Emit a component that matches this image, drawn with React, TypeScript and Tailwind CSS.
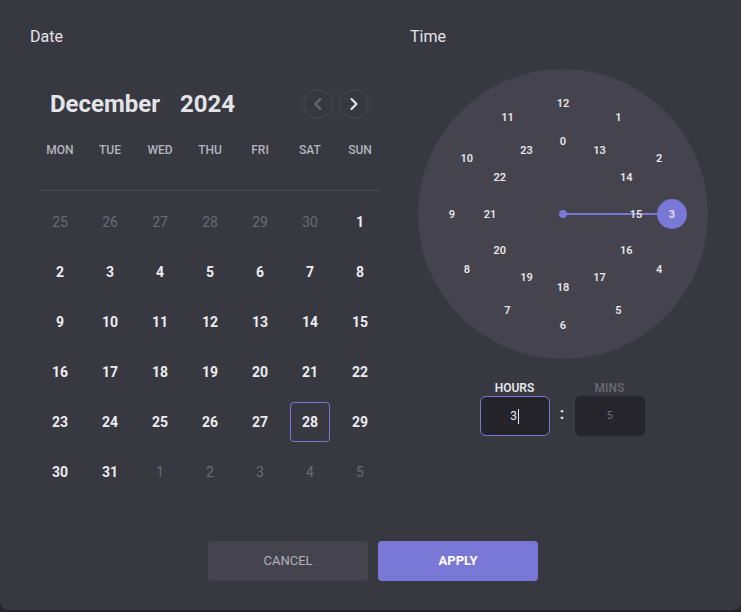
import { ChevronLeft, ChevronRight } from 'lucide-react';

const WEEKDAYS = ['MON', 'TUE', 'WED', 'THU', 'FRI', 'SAT', 'SUN'];

type Day = { n: number; muted?: boolean };

// December 2024, Monday-first, padded with days from Nov / Jan
const DAYS: Day[] = [
  ...[25, 26, 27, 28, 29, 30].map((n) => ({ n, muted: true })),
  ...Array.from({ length: 31 }, (_, i) => ({ n: i + 1 })),
  ...[1, 2, 3, 4, 5].map((n) => ({ n, muted: true })),
];

const SELECTED_DAY = 28;
const SELECTED_HOUR = 3;

function Calendar() {
  return (
    <div className="flex flex-col">
      <div className="mt-[41px] flex h-[32px] items-center pl-[50px] pr-[11px]">
        <span className="text-[24px] font-bold text-[#e4e4e8]">December</span>
        <span className="ml-[20px] text-[24px] font-bold text-[#e4e4e8]">2024</span>
        <div className="ml-auto flex gap-[6px]">
          <button className="flex h-[30px] w-[30px] items-center justify-center rounded-full border border-[#4a4a54] text-[#6c6c76]">
            <ChevronLeft size={20} strokeWidth={2.5} />
          </button>
          <button className="flex h-[30px] w-[30px] items-center justify-center rounded-full border border-[#4a4a54] text-[#ececf0]">
            <ChevronRight size={20} strokeWidth={2.5} />
          </button>
        </div>
      </div>

      <div className="ml-[35px] mt-[22px] grid w-[350px] grid-cols-7">
        {WEEKDAYS.map((d) => (
          <div key={d} className="h-[16px] text-center text-[12px] font-medium leading-[16px] text-[#b4b4bc]">
            {d}
          </div>
        ))}
      </div>

      <div className="ml-[40px] mt-[32px] h-px w-[340px] bg-[#4a4a54]" />

      <div className="ml-[35px] mt-[6px] grid w-[350px] grid-cols-7">
        {DAYS.map((d, i) => {
          const selected = !d.muted && d.n === SELECTED_DAY;
          return (
            <div key={i} className="flex h-[50px] items-center justify-center">
              <div
                className={
                  'flex h-[40px] w-[40px] items-center justify-center rounded-[4px] border text-[14px] ' +
                  (selected ? 'border-[#7a78d6] ' : 'border-transparent ') +
                  (d.muted ? 'font-normal text-[#6b6b74]' : 'font-bold text-[#ececf0]')
                }
              >
                {d.n}
              </div>
            </div>
          );
        })}
      </div>
    </div>
  );
}

function ClockFace() {
  const c = 145;
  const outer = 111;
  const inner = 73;
  const pos = (i: number, r: number) => {
    const a = (i / 12) * Math.PI * 2 - Math.PI / 2;
    return { x: c + Math.cos(a) * r, y: c + Math.sin(a) * r };
  };
  const sel = pos(SELECTED_HOUR, outer - 2);

  return (
    <svg width={290} height={290} viewBox="0 0 290 290" className="block">
      <circle cx={c} cy={c} r={145} fill="#45444e" />
      <line x1={c} y1={c} x2={sel.x} y2={sel.y} stroke="#7a78d6" strokeWidth={2} />
      <circle cx={c} cy={c} r={4} fill="#7a78d6" />
      <circle cx={sel.x} cy={sel.y} r={15} fill="#7a78d6" />
      {Array.from({ length: 12 }, (_, i) => {
        const p = pos(i, outer);
        const label = i === 0 ? 12 : i;
        return (
          <text
            key={'o' + i}
            x={i === SELECTED_HOUR ? sel.x : p.x}
            y={i === SELECTED_HOUR ? sel.y : p.y}
            textAnchor="middle"
            dominantBaseline="central"
            fontSize={11}
            fontWeight={600}
            fill="#e6e6ea"
          >
            {label}
          </text>
        );
      })}
      {Array.from({ length: 12 }, (_, i) => {
        const p = pos(i, inner);
        return (
          <text
            key={'i' + i}
            x={p.x}
            y={p.y}
            textAnchor="middle"
            dominantBaseline="central"
            fontSize={11}
            fontWeight={600}
            fill="#e6e6ea"
          >
            {i === 0 ? 0 : i + 12}
          </text>
        );
      })}
    </svg>
  );
}

function TimePicker() {
  return (
    <div className="flex flex-col">
      <div className="ml-[8px] mt-[22px]">
        <ClockFace />
      </div>
      <div className="ml-[7px] mt-[22px] flex w-[290px] justify-center">
        <div className="flex w-[70px] flex-col items-center">
          <span className="h-[14px] text-[12px] font-semibold leading-[14px] text-[#e6e6ea]">HOURS</span>
          <div className="mt-[1px] flex h-[40px] w-[70px] items-center justify-center rounded-[6px] border border-[#7a78d6] bg-[#25242a] text-[12px] text-[#e6e6ea]">
            3<span className="ml-px inline-block h-[15px] w-px bg-[#e6e6ea]" />
          </div>
        </div>
        <div className="flex w-[25px] items-end justify-center pb-[10px] text-[16px] font-bold text-[#e6e6ea]">:</div>
        <div className="flex w-[70px] flex-col items-center">
          <span className="h-[14px] text-[12px] font-semibold leading-[14px] text-[#66666e]">MINS</span>
          <div className="mt-[1px] flex h-[40px] w-[70px] items-center justify-center rounded-[6px] bg-[#26252b] text-[11px] text-[#6e6e76]">
            5
          </div>
        </div>
      </div>
    </div>
  );
}

export default function App() {
  return (
    <div className="h-[612px] w-[741px] bg-[#24242a]" style={{ fontFamily: 'Roboto, "Noto Sans", sans-serif' }}>
      <div className="flex h-[610px] flex-col rounded-b-[8px] bg-[#383841]">
        <div className="flex">
          <div className="flex w-[380px] flex-col">
            <div className="ml-[30px] mt-[27px] h-[20px] text-[16px] leading-[20px] text-[#e4e4e8]">Date</div>
            <Calendar />
          </div>
          <div className="ml-[30px] flex flex-col">
            <div className="mt-[27px] h-[20px] text-[16px] leading-[20px] text-[#e4e4e8]">Time</div>
            <TimePicker />
          </div>
        </div>

        <div className="ml-[208px] mt-[44px] flex gap-[10px]">
          <button className="h-[40px] w-[160px] rounded-[4px] bg-[#45444e] text-[13px] text-[#b2b2ba]">CANCEL</button>
          <button className="h-[40px] w-[160px] rounded-[4px] bg-[#7a78d6] text-[13px] font-bold text-white">APPLY</button>
        </div>
      </div>
    </div>
  );
}
